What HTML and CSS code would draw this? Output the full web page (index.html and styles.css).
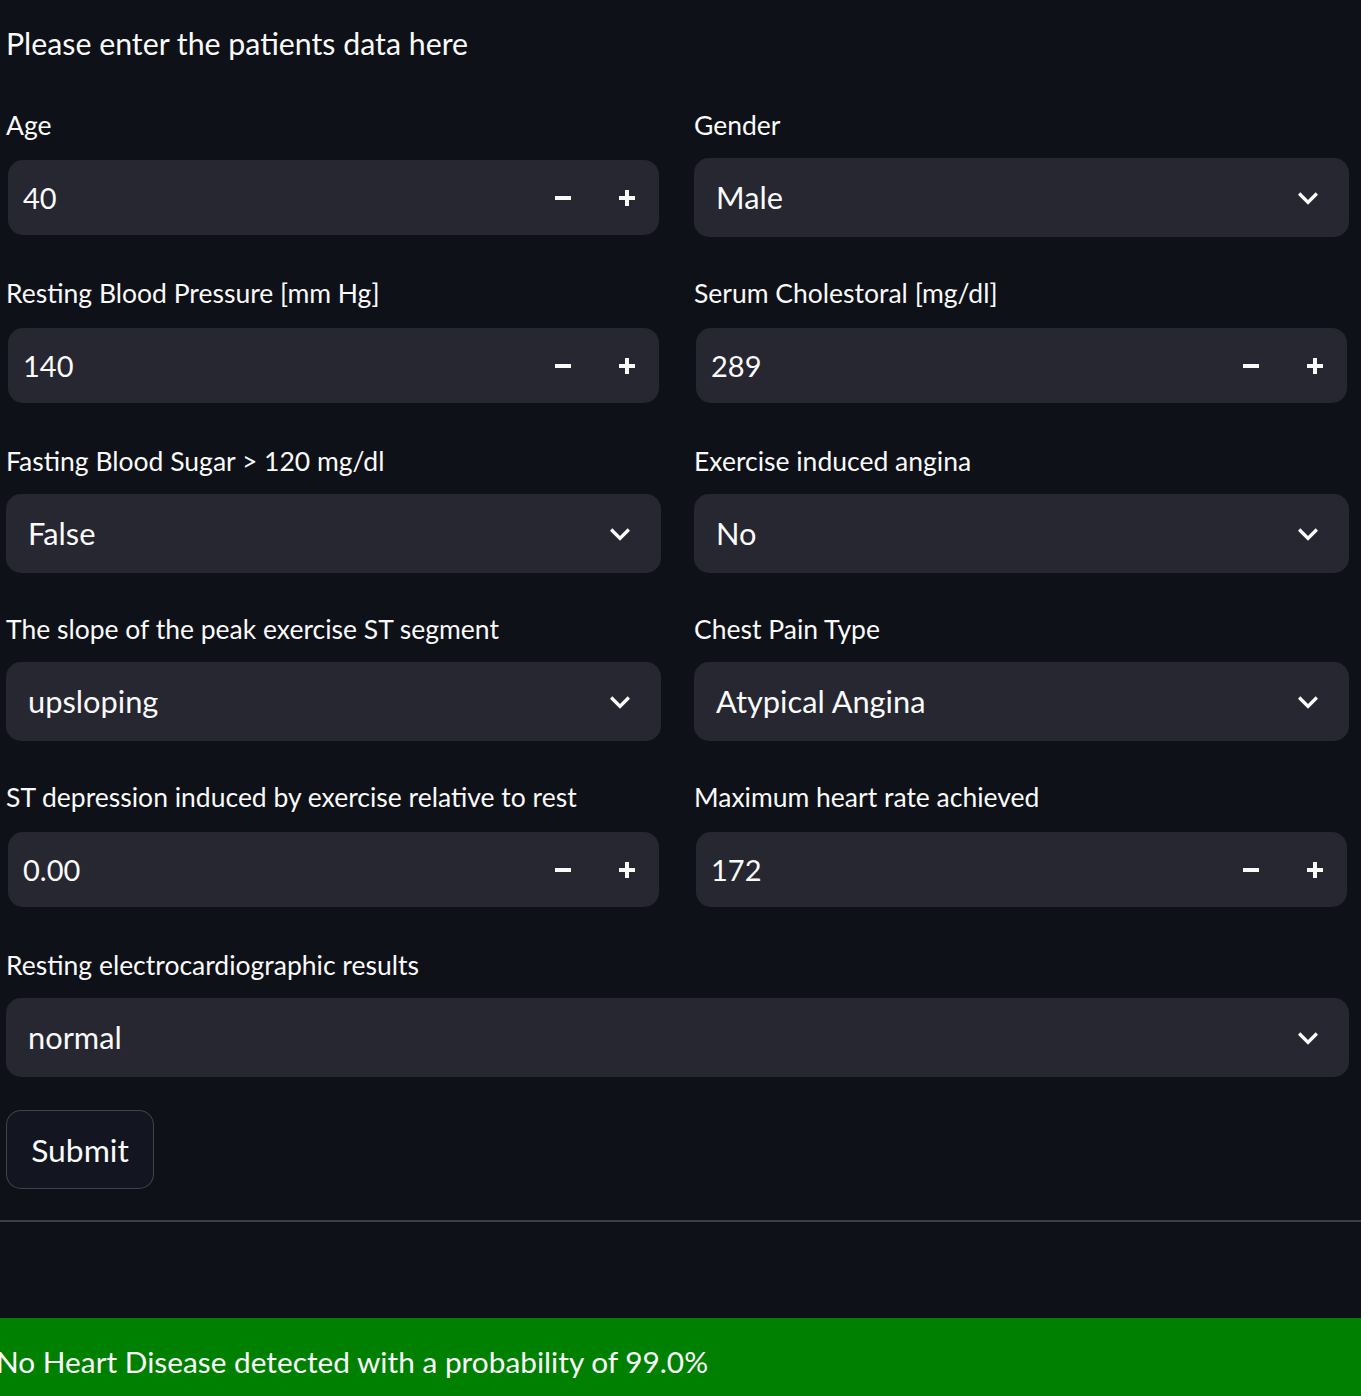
FILE: index.html
```html
<!DOCTYPE html>
<html lang="en">
<head>
<meta charset="utf-8">
<title>Heart Disease Prediction</title>
<link rel="stylesheet" href="styles.css">
</head>
<body>
<div class="page">
  <p class="title">Please enter the patients data here</p>
  <div class="grid">
    <div class="field">
      <label class="lbl">Age</label>
      <div class="num"><span class="nval">40</span>
        <div class="steps">
          <span class="step"><svg width="16" height="16" viewBox="0 0 16 16"><rect x="0" y="6" width="16" height="4" fill="#fafafa"/></svg></span>
          <span class="step"><svg width="16" height="16" viewBox="0 0 16 16"><rect x="0" y="6" width="16" height="4" fill="#fafafa"/><rect x="6" y="0" width="4" height="16" fill="#fafafa"/></svg></span>
        </div>
      </div>
    </div>
    <div class="field">
      <label class="lbl">Gender</label>
      <div class="sel"><span class="val">Male</span>
        <svg class="chev" width="40" height="40" viewBox="0 0 24 24"><path d="M16.59 8.59L12 13.17 7.41 8.59 6 10l6 6 6-6z" fill="#fafafa"/></svg>
      </div>
    </div>

    <div class="field">
      <label class="lbl">Resting Blood Pressure [mm Hg]</label>
      <div class="num"><span class="nval">140</span>
        <div class="steps">
          <span class="step"><svg width="16" height="16" viewBox="0 0 16 16"><rect x="0" y="6" width="16" height="4" fill="#fafafa"/></svg></span>
          <span class="step"><svg width="16" height="16" viewBox="0 0 16 16"><rect x="0" y="6" width="16" height="4" fill="#fafafa"/><rect x="6" y="0" width="4" height="16" fill="#fafafa"/></svg></span>
        </div>
      </div>
    </div>
    <div class="field">
      <label class="lbl">Serum Cholestoral [mg/dl]</label>
      <div class="num"><span class="nval">289</span>
        <div class="steps">
          <span class="step"><svg width="16" height="16" viewBox="0 0 16 16"><rect x="0" y="6" width="16" height="4" fill="#fafafa"/></svg></span>
          <span class="step"><svg width="16" height="16" viewBox="0 0 16 16"><rect x="0" y="6" width="16" height="4" fill="#fafafa"/><rect x="6" y="0" width="4" height="16" fill="#fafafa"/></svg></span>
        </div>
      </div>
    </div>

    <div class="field">
      <label class="lbl">Fasting Blood Sugar &gt; 120 mg/dl</label>
      <div class="sel"><span class="val">False</span>
        <svg class="chev" width="40" height="40" viewBox="0 0 24 24"><path d="M16.59 8.59L12 13.17 7.41 8.59 6 10l6 6 6-6z" fill="#fafafa"/></svg>
      </div>
    </div>
    <div class="field">
      <label class="lbl">Exercise induced angina</label>
      <div class="sel"><span class="val">No</span>
        <svg class="chev" width="40" height="40" viewBox="0 0 24 24"><path d="M16.59 8.59L12 13.17 7.41 8.59 6 10l6 6 6-6z" fill="#fafafa"/></svg>
      </div>
    </div>

    <div class="field">
      <label class="lbl">The slope of the peak exercise ST segment</label>
      <div class="sel"><span class="val">upsloping</span>
        <svg class="chev" width="40" height="40" viewBox="0 0 24 24"><path d="M16.59 8.59L12 13.17 7.41 8.59 6 10l6 6 6-6z" fill="#fafafa"/></svg>
      </div>
    </div>
    <div class="field">
      <label class="lbl">Chest Pain Type</label>
      <div class="sel"><span class="val">Atypical Angina</span>
        <svg class="chev" width="40" height="40" viewBox="0 0 24 24"><path d="M16.59 8.59L12 13.17 7.41 8.59 6 10l6 6 6-6z" fill="#fafafa"/></svg>
      </div>
    </div>

    <div class="field">
      <label class="lbl">ST depression induced by exercise relative to rest</label>
      <div class="num"><span class="nval">0.00</span>
        <div class="steps">
          <span class="step"><svg width="16" height="16" viewBox="0 0 16 16"><rect x="0" y="6" width="16" height="4" fill="#fafafa"/></svg></span>
          <span class="step"><svg width="16" height="16" viewBox="0 0 16 16"><rect x="0" y="6" width="16" height="4" fill="#fafafa"/><rect x="6" y="0" width="4" height="16" fill="#fafafa"/></svg></span>
        </div>
      </div>
    </div>
    <div class="field">
      <label class="lbl">Maximum heart rate achieved</label>
      <div class="num"><span class="nval">172</span>
        <div class="steps">
          <span class="step"><svg width="16" height="16" viewBox="0 0 16 16"><rect x="0" y="6" width="16" height="4" fill="#fafafa"/></svg></span>
          <span class="step"><svg width="16" height="16" viewBox="0 0 16 16"><rect x="0" y="6" width="16" height="4" fill="#fafafa"/><rect x="6" y="0" width="4" height="16" fill="#fafafa"/></svg></span>
        </div>
      </div>
    </div>

    <div class="field full">
      <label class="lbl">Resting electrocardiographic results</label>
      <div class="sel"><span class="val">normal</span>
        <svg class="chev" width="40" height="40" viewBox="0 0 24 24"><path d="M16.59 8.59L12 13.17 7.41 8.59 6 10l6 6 6-6z" fill="#fafafa"/></svg>
      </div>
    </div>
  </div>
  <button class="submit" type="button">Submit</button>
</div>
<div class="divider"></div>
<div class="result">No Heart Disease detected with a probability of 99.0%</div>
</body>
</html>
```

FILE: styles.css
```css
html, body {
  margin: 0;
  padding: 0;
  background: #0e1117;
  color: #fafafa;
  font-family: Lato, "Liberation Sans", sans-serif;
  overflow: hidden;
}

.page {
  padding-left: 6px;
  width: 1343px;
}

.title {
  margin: 0;
  height: 88px;
  line-height: 87px;
  font-size: 30.3px;
  white-space: nowrap;
}

.grid {
  margin-top: 20px;
  display: grid;
  grid-template-columns: 655px 655px;
  column-gap: 33px;
  row-gap: 39px;
}

.field {
  display: flex;
  flex-direction: column;
}

.field.full {
  grid-column: 1 / span 2;
}

.lbl {
  display: block;
  height: 36px;
  line-height: 35px;
  margin-bottom: 14px;
  font-size: 26.5px;
  white-space: nowrap;
}

.num {
  margin: 2px;
  height: 75px;
  background: #262730;
  border-radius: 15px;
  display: flex;
  align-items: center;
  padding-left: 15px;
}

.sel {
  height: 79px;
  background: #262730;
  border-radius: 15px;
  display: flex;
  align-items: center;
  padding-left: 22px;
  padding-right: 21px;
}

.val {
  flex: 1;
  font-size: 30.8px;
  white-space: nowrap;
}

.nval {
  flex: 1;
  font-size: 29px;
  white-space: nowrap;
}

.steps {
  display: flex;
  height: 100%;
}

.step {
  width: 64px;
  display: flex;
  align-items: center;
  justify-content: center;
}

.chev {
  display: block;
  flex: none;
}

.submit {
  margin-top: 33px;
  height: 79px;
  width: 148px;
  background: #131620;
  border: 1px solid rgba(250, 250, 250, 0.2);
  border-radius: 15px;
  color: #fafafa;
  font-family: Lato, "Liberation Sans", sans-serif;
  font-size: 31.8px;
  padding: 0;
  display: block;
}

.divider {
  margin-top: 31px;
  height: 2px;
  background: rgba(250, 250, 250, 0.2);
}

.result {
  margin-top: 96px;
  height: 78px;
  box-sizing: border-box;
  padding-top: 26px;
  line-height: 36px;
  background: #008000;
  font-size: 29.8px;
  text-indent: -4px;
  white-space: nowrap;
}
```
